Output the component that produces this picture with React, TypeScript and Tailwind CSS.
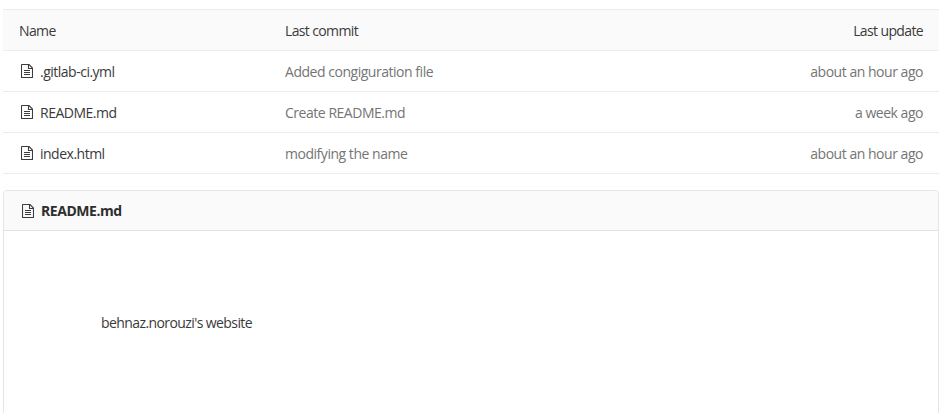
interface TreeEntry {
  name: string;
  commit: string;
  updated: string;
}

const ENTRIES: TreeEntry[] = [
  { name: ".gitlab-ci.yml", commit: "Added congiguration file", updated: "about an hour ago" },
  { name: "README.md", commit: "Create README.md", updated: "a week ago" },
  { name: "index.html", commit: "modifying the name", updated: "about an hour ago" },
];

function FileIcon() {
  return (
    <svg viewBox="0 0 12 14" className="w-3 h-3.5 shrink-0" fill="none" stroke="#3c3c3c" strokeWidth="1.1">
      <path d="M1 .5h7l3.5 3.5v9a.5.5 0 0 1-.5.5H1a.5.5 0 0 1-.5-.5V1A.5.5 0 0 1 1 .5z" />
      <path d="M7.5.5v4h4M3 6.5h6M3 8.5h6M3 10.5h6" />
    </svg>
  );
}

export default function App() {
  return (
    <div className="w-[944px] h-[413px] overflow-hidden bg-white pl-[3px] pr-[5px] pt-[9px] text-[14px] text-[#3a3a3a] font-['Open_Sans','Noto_Sans',sans-serif]">
      <div className="border-t border-[#ececec]">
        <div className="grid grid-cols-[266px_1fr_auto] items-center h-[41px] px-4 bg-[#fafafa] border-b border-[#ececec] tracking-[-0.63px]">
          <span>Name</span>
          <span>Last commit</span>
          <span>Last update</span>
        </div>
        {ENTRIES.map((entry) => (
          <div
            key={entry.name}
            className="grid grid-cols-[266px_1fr_auto] items-center h-[41px] px-4 border-b border-[#ececec] tracking-[-0.47px]"
          >
            <span className="flex items-center gap-[7px] pl-[2px] tracking-[-0.5px]">
              <FileIcon />
              {entry.name}
            </span>
            <span className="text-[#757575]">{entry.commit}</span>
            <span className="text-[#757575]">{entry.updated}</span>
          </div>
        ))}
      </div>
      <div className="mt-4 h-[240px] border border-[#e5e5e5] rounded-t-[4px]">
        <div className="flex items-center gap-[7px] h-[40px] pl-[18px] bg-[#fafafa] border-b border-[#e2e2e2] rounded-t-[4px] font-bold tracking-[-0.45px] text-[#2e2e2e]">
          <FileIcon />
          README.md
        </div>
        <p className="pl-[97px] pt-[81px] tracking-[-0.59px]">behnaz.norouzi's website</p>
      </div>
    </div>
  );
}
